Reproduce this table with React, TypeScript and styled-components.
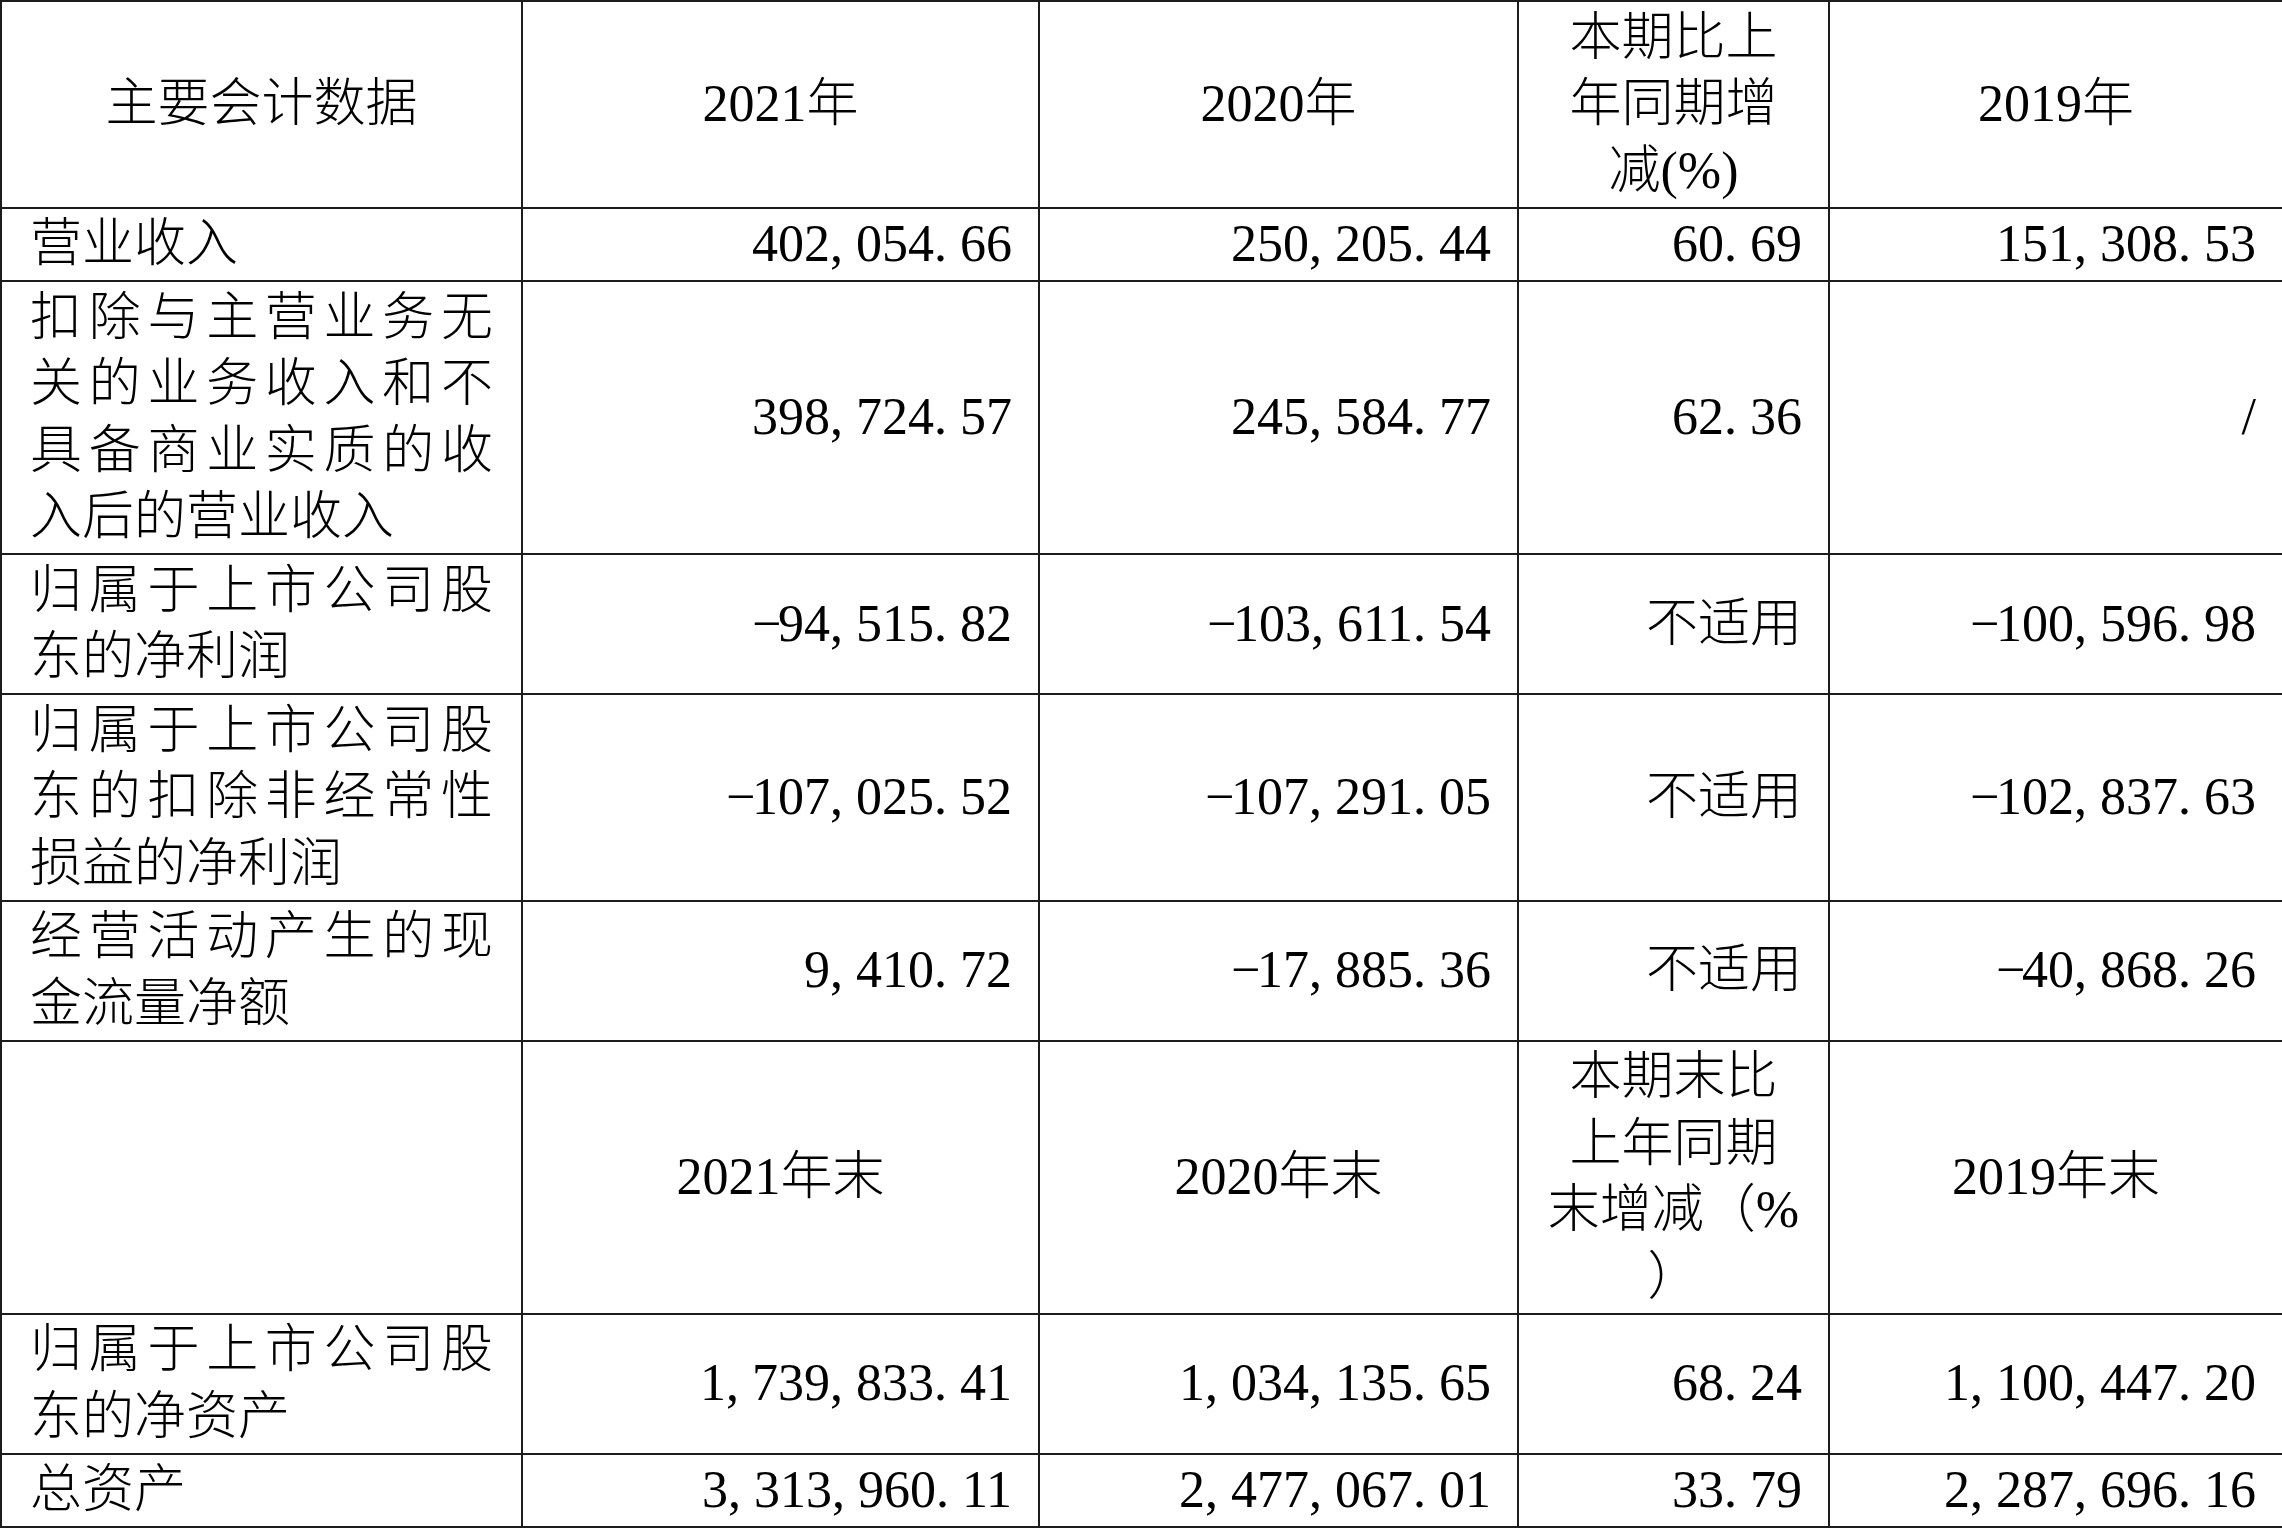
import React from "react";
import styled, { createGlobalStyle } from "styled-components";

const GlobalStyle = createGlobalStyle`
  html, body {
    margin: 0;
    padding: 0;
    background: #ffffff;
  }
  body {
    font-family: "Liberation Serif", "Noto Sans CJK SC", serif;
  }
`;

const Table = styled.table`
  width: 2282px;
  border-collapse: collapse;
  table-layout: fixed;
  font-family: "Liberation Serif", "Noto Sans CJK SC", serif;
  font-size: 52px;
  font-weight: 300;
  line-height: 66.5px;
  color: #000000;
`;

const Col = styled.col<{ $w: number }>`
  width: ${(p) => p.$w}px;
`;

const BaseCell = styled.td`
  border: 2px solid #1c1c1c;
  vertical-align: middle;
  padding-top: 2.5px;
  padding-bottom: 2.5px;
`;

const LabelCell = styled(BaseCell)`
  padding-left: 28px;
  padding-right: 28px;
  text-align: justify;
  text-justify: inter-character;
`;

const HeadCell = styled(BaseCell)`
  padding-left: 4px;
  padding-right: 4px;
  text-align: center;
  white-space: nowrap;
`;

const ValueCell = styled(BaseCell)`
  padding-left: 8px;
  padding-right: 26px;
  text-align: right;
  white-space: nowrap;
`;

const Line = styled.span`
  display: block;
`;

const Punct = styled.span<{ $center?: boolean }>`
  display: inline-block;
  width: 0.5em;
  text-align: ${(p) => (p.$center ? "center" : "left")};
  overflow: visible;
  white-space: nowrap;
`;

const Num: React.FC<{ value: string }> = ({ value }) => {
  if (!/^[-\d,.]+$/.test(value)) return <>{value}</>;
  return (
    <>
      {value.split("").map((ch, i) => {
        if (ch === "," || ch === ".") return <Punct key={i}>{ch}</Punct>;
        if (ch === "-")
          return (
            <Punct key={i} $center>
              {"\u2212"}
            </Punct>
          );
        return <React.Fragment key={i}>{ch}</React.Fragment>;
      })}
    </>
  );
};

type Head = string | string[];

const HeadContent: React.FC<{ value: Head }> = ({ value }) =>
  Array.isArray(value) ? (
    <>
      {value.map((l, i) => (
        <Line key={i}>{l}</Line>
      ))}
    </>
  ) : (
    <>{value}</>
  );

const widths = [521, 517, 479, 311, 454];

const headerTop: Head[] = [
  "主要会计数据",
  "2021年",
  "2020年",
  ["本期比上", "年同期增", "减(%)"],
  "2019年",
];

const headerMid: Head[] = [
  "",
  "2021年末",
  "2020年末",
  ["本期末比", "上年同期", "末增减（%", "）"],
  "2019年末",
];

const flowRows: string[][] = [
  ["营业收入", "402,054.66", "250,205.44", "60.69", "151,308.53"],
  [
    "扣除与主营业务无关的业务收入和不具备商业实质的收入后的营业收入",
    "398,724.57",
    "245,584.77",
    "62.36",
    "/",
  ],
  ["归属于上市公司股东的净利润", "-94,515.82", "-103,611.54", "不适用", "-100,596.98"],
  [
    "归属于上市公司股东的扣除非经常性损益的净利润",
    "-107,025.52",
    "-107,291.05",
    "不适用",
    "-102,837.63",
  ],
  ["经营活动产生的现金流量净额", "9,410.72", "-17,885.36", "不适用", "-40,868.26"],
];

const stockRows: string[][] = [
  ["归属于上市公司股东的净资产", "1,739,833.41", "1,034,135.65", "68.24", "1,100,447.20"],
  ["总资产", "3,313,960.11", "2,477,067.01", "33.79", "2,287,696.16"],
];

const HeaderRow: React.FC<{ cells: Head[] }> = ({ cells }) => (
  <tr>
    {cells.map((c, i) => (
      <HeadCell key={i}>
        <HeadContent value={c} />
      </HeadCell>
    ))}
  </tr>
);

const DataRow: React.FC<{ cells: string[] }> = ({ cells }) => (
  <tr>
    <LabelCell>{cells[0]}</LabelCell>
    {cells.slice(1).map((c, i) => (
      <ValueCell key={i}>
        <Num value={c} />
      </ValueCell>
    ))}
  </tr>
);

export default function App() {
  return (
    <>
      <GlobalStyle />
      <Table>
        <colgroup>
          {widths.map((w, i) => (
            <Col key={i} $w={w} />
          ))}
        </colgroup>
        <tbody>
          <HeaderRow cells={headerTop} />
          {flowRows.map((r, i) => (
            <DataRow key={`f${i}`} cells={r} />
          ))}
          <HeaderRow cells={headerMid} />
          {stockRows.map((r, i) => (
            <DataRow key={`s${i}`} cells={r} />
          ))}
        </tbody>
      </Table>
    </>
  );
}
